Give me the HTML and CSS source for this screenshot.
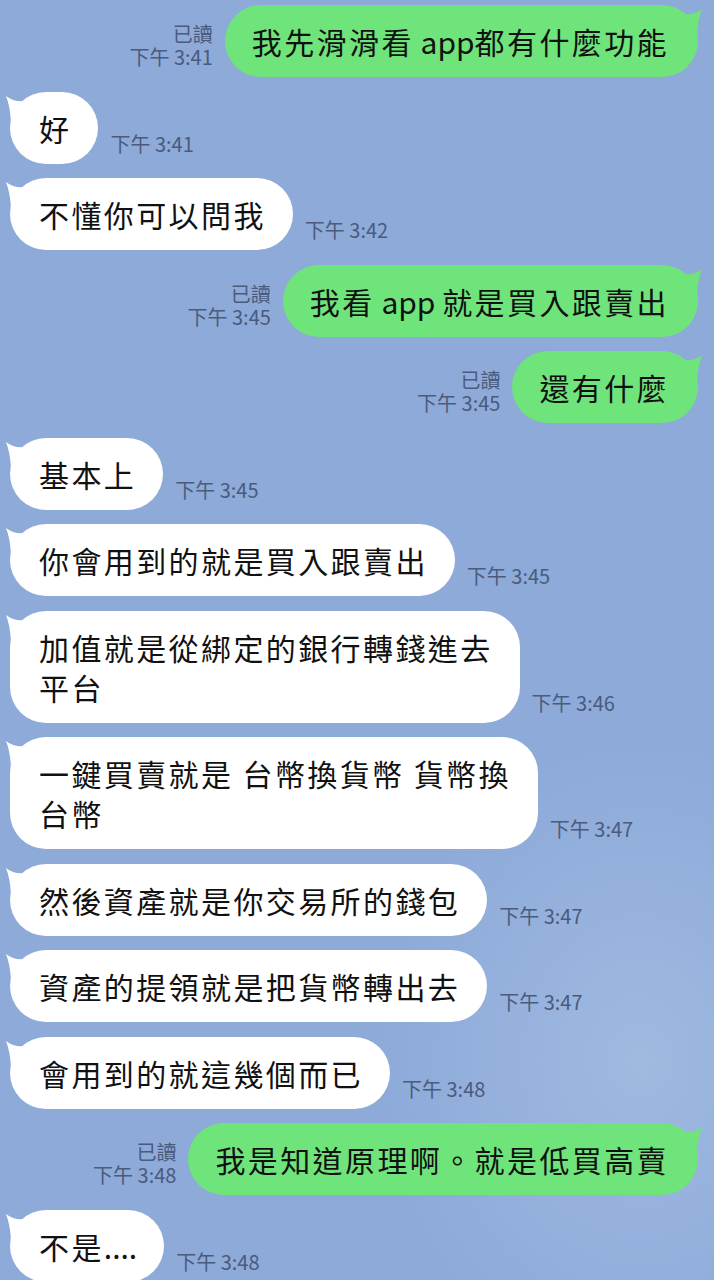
FILE: index.html
```html
<!DOCTYPE html>
<html lang="zh-Hant">
  <head>
    <meta charset="UTF-8" />
    <meta name="viewport" content="width=device-width, initial-scale=1.0" />
    <title>聊天</title>
    <link rel="stylesheet" href="styles.css">
  </head>
  <body>
    <div class="chat">
      <div class="row out">
        <div class="meta"><span>已讀</span><span>下午 3:41</span></div>
        <div class="bubble">
          <svg class="tail" viewBox="0 0 34 34"><path d="M4 4 Q14 12 28 8 L28 30 L9 30 Q8 14 4 4 Z" /></svg>
          我先滑滑看<span class="latin"> app</span>都有什麼功能
        </div>
      </div>

      <div class="row in">
        <div class="bubble">
          <svg class="tail" viewBox="0 0 34 34"><path d="M4 4 Q14 12 28 8 L28 30 L9 30 Q8 14 4 4 Z" /></svg>
          好
        </div>
        <div class="meta"><span>下午 3:41</span></div>
      </div>

      <div class="row in">
        <div class="bubble">
          <svg class="tail" viewBox="0 0 34 34"><path d="M4 4 Q14 12 28 8 L28 30 L9 30 Q8 14 4 4 Z" /></svg>
          不懂你可以問我
        </div>
        <div class="meta"><span>下午 3:42</span></div>
      </div>

      <div class="row out">
        <div class="meta"><span>已讀</span><span>下午 3:45</span></div>
        <div class="bubble">
          <svg class="tail" viewBox="0 0 34 34"><path d="M4 4 Q14 12 28 8 L28 30 L9 30 Q8 14 4 4 Z" /></svg>
          我看<span class="latin"> app </span>就是買入跟賣出
        </div>
      </div>

      <div class="row out">
        <div class="meta"><span>已讀</span><span>下午 3:45</span></div>
        <div class="bubble">
          <svg class="tail" viewBox="0 0 34 34"><path d="M4 4 Q14 12 28 8 L28 30 L9 30 Q8 14 4 4 Z" /></svg>
          還有什麼
        </div>
      </div>

      <div class="row in">
        <div class="bubble">
          <svg class="tail" viewBox="0 0 34 34"><path d="M4 4 Q14 12 28 8 L28 30 L9 30 Q8 14 4 4 Z" /></svg>
          基本上
        </div>
        <div class="meta"><span>下午 3:45</span></div>
      </div>

      <div class="row in">
        <div class="bubble">
          <svg class="tail" viewBox="0 0 34 34"><path d="M4 4 Q14 12 28 8 L28 30 L9 30 Q8 14 4 4 Z" /></svg>
          你會用到的就是買入跟賣出
        </div>
        <div class="meta"><span>下午 3:45</span></div>
      </div>

      <div class="row in">
        <div class="bubble">
          <svg class="tail" viewBox="0 0 34 34"><path d="M4 4 Q14 12 28 8 L28 30 L9 30 Q8 14 4 4 Z" /></svg>
          加值就是從綁定的銀行轉錢進去<br>平台
        </div>
        <div class="meta"><span>下午 3:46</span></div>
      </div>

      <div class="row in">
        <div class="bubble">
          <svg class="tail" viewBox="0 0 34 34"><path d="M4 4 Q14 12 28 8 L28 30 L9 30 Q8 14 4 4 Z" /></svg>
          一鍵買賣就是 台幣換貨幣 貨幣換<br>台幣
        </div>
        <div class="meta"><span>下午 3:47</span></div>
      </div>

      <div class="row in">
        <div class="bubble">
          <svg class="tail" viewBox="0 0 34 34"><path d="M4 4 Q14 12 28 8 L28 30 L9 30 Q8 14 4 4 Z" /></svg>
          然後資產就是你交易所的錢包
        </div>
        <div class="meta"><span>下午 3:47</span></div>
      </div>

      <div class="row in">
        <div class="bubble">
          <svg class="tail" viewBox="0 0 34 34"><path d="M4 4 Q14 12 28 8 L28 30 L9 30 Q8 14 4 4 Z" /></svg>
          資產的提領就是把貨幣轉出去
        </div>
        <div class="meta"><span>下午 3:47</span></div>
      </div>

      <div class="row in">
        <div class="bubble">
          <svg class="tail" viewBox="0 0 34 34"><path d="M4 4 Q14 12 28 8 L28 30 L9 30 Q8 14 4 4 Z" /></svg>
          會用到的就這幾個而已
        </div>
        <div class="meta"><span>下午 3:48</span></div>
      </div>

      <div class="row out">
        <div class="meta"><span>已讀</span><span>下午 3:48</span></div>
        <div class="bubble">
          <svg class="tail" viewBox="0 0 34 34"><path d="M4 4 Q14 12 28 8 L28 30 L9 30 Q8 14 4 4 Z" /></svg>
          我是知道原理啊。就是低買高賣
        </div>
      </div>

      <div class="row in">
        <div class="bubble">
          <svg class="tail" viewBox="0 0 34 34"><path d="M4 4 Q14 12 28 8 L28 30 L9 30 Q8 14 4 4 Z" /></svg>
          不是<span class="latin">....</span>
        </div>
        <div class="meta"><span>下午 3:48</span></div>
      </div>
    </div>
  </body>
</html>
```

FILE: styles.css
```css
* {
  padding: 0;
  margin: 0;
  box-sizing: border-box;
}
body {
  width: 714px;
  height: 1280px;
  overflow: hidden;
  background-color: #8daad9;
  background-image: radial-gradient(
    ellipse 260px 320px at 640px 1060px,
    #9fb9e0 0%,
    rgba(159, 185, 224, 0) 100%
  );
  font-family: "Noto Sans CJK TC", "Noto Sans", sans-serif;
}
.chat {
  display: flex;
  flex-direction: column;
  gap: 14.5px;
  padding: 5px 16px 0 10px;
}
.row {
  display: flex;
  align-items: flex-end;
  gap: 12px;
}
.out {
  justify-content: flex-end;
}
.bubble {
  position: relative;
  background-color: white;
  color: #111;
  font-size: 30px;
  line-height: 40px;
  letter-spacing: 2.4px;
  padding: 16px 27px 16px 29px;
  border-radius: 36px;
}
.latin {
  letter-spacing: 0;
}
.out .bubble {
  background-color: #6ee47b;
  padding: 16px 29px 16px 27px;
}
.tail {
  position: absolute;
  top: 0;
  left: -8px;
  width: 34px;
  height: 34px;
  fill: white;
}
.out .tail {
  left: auto;
  right: -8px;
  transform: scaleX(-1);
  fill: #6ee47b;
}
.meta {
  display: flex;
  flex-direction: column;
  align-items: flex-start;
  padding-bottom: 9px;
  color: #4b5b7c;
  font-size: 20px;
  line-height: 23px;
  white-space: nowrap;
}
.out .meta {
  align-items: flex-end;
}
```
